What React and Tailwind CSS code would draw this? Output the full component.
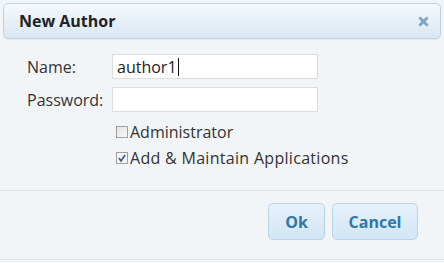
export default function App() {
  return (
    <div className="w-[444px] h-[263px] bg-[#f2f5f7] flex flex-col font-['Open_Sans',sans-serif] overflow-hidden">
      {/* Title bar */}
      <div className="mx-[3px] mt-[3px] h-[36px] flex items-center justify-between pl-[15px] pr-[11px] rounded-[5px] border border-[#bfd3e3] bg-gradient-to-b from-[#f4f9fd] to-[#dae7f3] shadow-[0_1px_1px_rgba(0,0,0,0.06)]">
        <span className="text-[16px] font-bold text-[#222]">New Author</span>
        <svg width="11" height="11" viewBox="0 0 10 10">
          <path d="M2 2 L8 8 M8 2 L2 8" stroke="#7ea6c6" strokeWidth="2.6" strokeLinecap="round" />
        </svg>
      </div>

      {/* Form */}
      <div className="flex-1 pt-[15px] pl-[27px] text-[16px] text-[#333]">
        <div className="flex items-center h-[25px]">
          <label className="w-[85px]">Name:</label>
          <div className="w-[206px] h-[25px] px-[4px] bg-white border border-[#dcdcdc] text-[16px] text-[#222] flex items-center">
            <span>author1</span>
            <span className="w-[1px] h-[18px] bg-[#111] ml-[1px]" />
          </div>
        </div>
        <div className="flex items-center h-[25px] mt-[8px]">
          <label className="w-[85px]">Password:</label>
          <input
            type="password"
            className="w-[206px] h-[25px] px-[4px] bg-white border border-[#dcdcdc] outline-none"
          />
        </div>
        <div className="flex items-center ml-[89px] mt-[7px] h-[26px]">
          <span className="w-[12px] h-[12px] border border-[#a0a0a0] bg-gradient-to-br from-[#e4e4e4] to-[#f8f8f8] mr-[2px]" />
          <span>Administrator</span>
        </div>
        <div className="flex items-center ml-[89px] h-[26px]">
          <span className="w-[12px] h-[12px] border border-[#a0a0a0] bg-[#f4f4f4] mr-[2px] flex items-center justify-center">
            <svg width="10" height="10" viewBox="0 0 10 10">
              <path d="M2 5 L4 8 L8 2" stroke="#3a5a8a" strokeWidth="1.6" fill="none" />
            </svg>
          </span>
          <span className="tracking-[0.3px]">Add &amp; Maintain Applications</span>
        </div>
      </div>

      {/* Button pane */}
      <div className="h-[69px] border-t border-[#dde3e8] flex items-start justify-end pt-[12px] pr-[26px] gap-[7px]">
        <button className="w-[57px] h-[37px] rounded-[5px] border border-[#b9d3e8] bg-gradient-to-b from-[#e6f1fa] to-[#d2e6f5] text-[#2e77a8] font-bold text-[16px]">
          Ok
        </button>
        <button className="w-[86px] h-[37px] rounded-[5px] border border-[#b9d3e8] bg-gradient-to-b from-[#e6f1fa] to-[#d2e6f5] text-[#2e77a8] font-bold text-[16px]">
          Cancel
        </button>
      </div>
      <div className="h-[4px] border-t border-[#dde3e8]" />
    </div>
  );
}
